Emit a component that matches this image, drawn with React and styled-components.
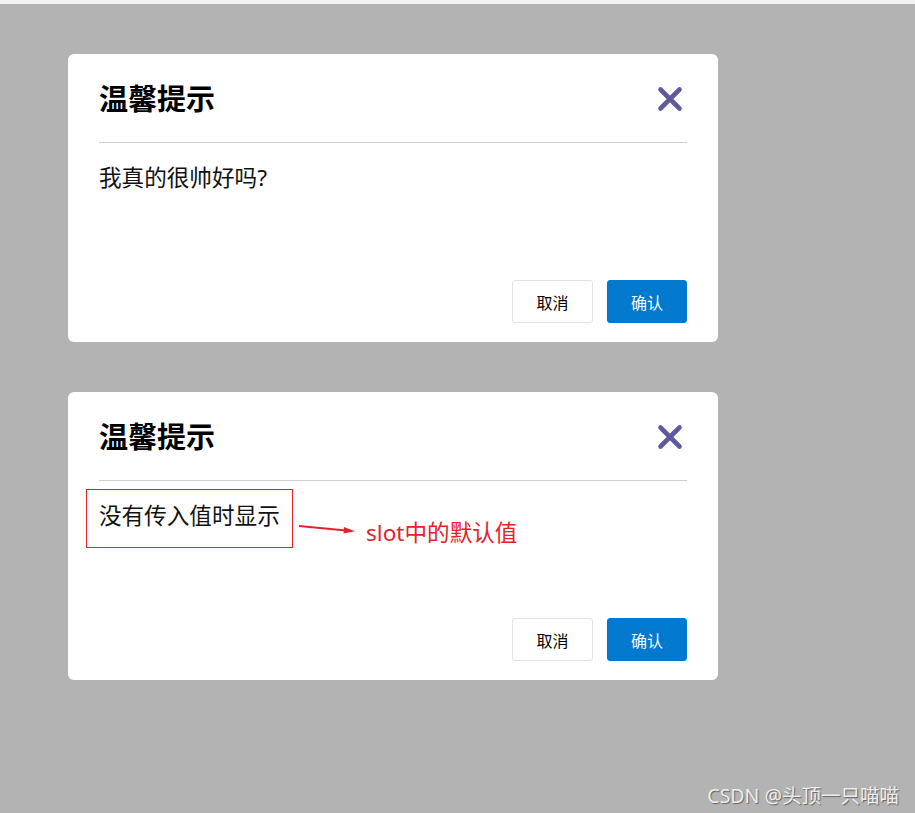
import React from 'react';
import styled, { createGlobalStyle } from 'styled-components';

const GlobalStyle = createGlobalStyle`
    html, body {
        margin: 0;
        padding: 0;
    }

    body {
        background: #f3f3f3;
        font-family: "Noto Sans", "Noto Sans CJK SC", sans-serif;
    }
`;

const Page = styled.div`
    position: relative;
    margin-top: 4px;
    min-height: 809px;
    background: #b3b3b3;
    padding: 50px 0 0 68px;
    box-sizing: border-box;
    display: flex;
    flex-direction: column;
    gap: 50px;
`;

const Dialog = styled.section`
    width: 650px;
    box-sizing: border-box;
    padding: 28px 31px 19px;
    background: #fff;
    border-radius: 6px;
    display: flex;
    flex-direction: column;
`;

const Header = styled.header`
    display: flex;
    align-items: center;
    justify-content: space-between;
    padding-bottom: 26px;
    border-bottom: 1px solid #cfcfcf;
`;

const Title = styled.h2`
    margin: 0;
    font-size: 29px;
    line-height: 34px;
    font-weight: 700;
    color: #000;
`;

const CloseButton = styled.button`
    display: flex;
    padding: 0;
    margin-right: 4px;
    border: 0;
    background: none;
    cursor: pointer;
    color: #5f5a9d;
`;

const Body = styled.div`
    position: relative;
    height: 137px;
    box-sizing: border-box;
    padding-top: 20px;
    font-size: 22.6px;
    line-height: 30px;
    color: #111;
`;

const Footer = styled.footer`
    display: flex;
    justify-content: flex-end;
    gap: 14px;
`;

const Button = styled.button`
    width: ${({ primary }) => primary ? '80px' : '81px'};
    height: 43px;
    box-sizing: border-box;
    border-radius: 3px;
    border: 1px solid ${({ primary }) => primary ? '#0079cf' : '#e1e1e6'};
    background: ${({ primary }) => primary ? '#0079cf' : '#fff'};
    color: ${({ primary }) => primary ? '#fff' : '#000'};
    font-family: inherit;
    font-size: 16px;
    cursor: pointer;
`;

// red markup drawn over the slot fallback text
const Highlight = styled.div`
    position: absolute;
    left: -13px;
    top: 8px;
    width: 207px;
    height: 59px;
    box-sizing: border-box;
    border: 1px solid #e8202a;
`;

const Pointer = styled.svg`
    position: absolute;
    left: 199px;
    top: 43px;
`;

const Note = styled.span`
    position: absolute;
    left: 267px;
    top: 37px;
    font-size: 22.6px;
    line-height: 30px;
    color: #e8202a;
`;

const Watermark = styled.span`
    position: absolute;
    right: 16px;
    bottom: 4px;
    font-size: 19.5px;
    line-height: 26px;
    color: #eeeeee;
    text-shadow: 1px 1px 1px rgba(0, 0, 0, 0.45);
`;

const CloseIcon = () => (
    <svg width='26' height='26' viewBox='0 0 26 26'>
        <path
            d='M3.5 3.5 L22.5 22.5 M22.5 3.5 L3.5 22.5'
            stroke='currentColor'
            strokeWidth='4.6'
            strokeLinecap='round'
            fill='none'
        />
    </svg>
);

const Modal = ({ title, children }) => (
    <Dialog>
        <Header>
            <Title>{title}</Title>
            <CloseButton aria-label='关闭'>
                <CloseIcon />
            </CloseButton>
        </Header>

        <Body>
            {children}
        </Body>

        <Footer>
            <Button>取消</Button>
            <Button primary>确认</Button>
        </Footer>
    </Dialog>
);

const App = () => (
    <>
        <GlobalStyle />
        <Page>
            <Modal title='温馨提示'>我真的很帅好吗?</Modal>

            <Modal title='温馨提示'>
                没有传入值时显示
                <Highlight />
                <Pointer width='58' height='10' viewBox='0 0 58 10'>
                    <path d='M1 2 L48 6.5' stroke='#e8202a' strokeWidth='2' />
                    <path d='M46 3 L57 7.2 L45.5 9.5 Z' fill='#e8202a' />
                </Pointer>
                <Note>slot中的默认值</Note>
            </Modal>

            <Watermark>CSDN @头顶一只喵喵</Watermark>
        </Page>
    </>
);

export default App;
